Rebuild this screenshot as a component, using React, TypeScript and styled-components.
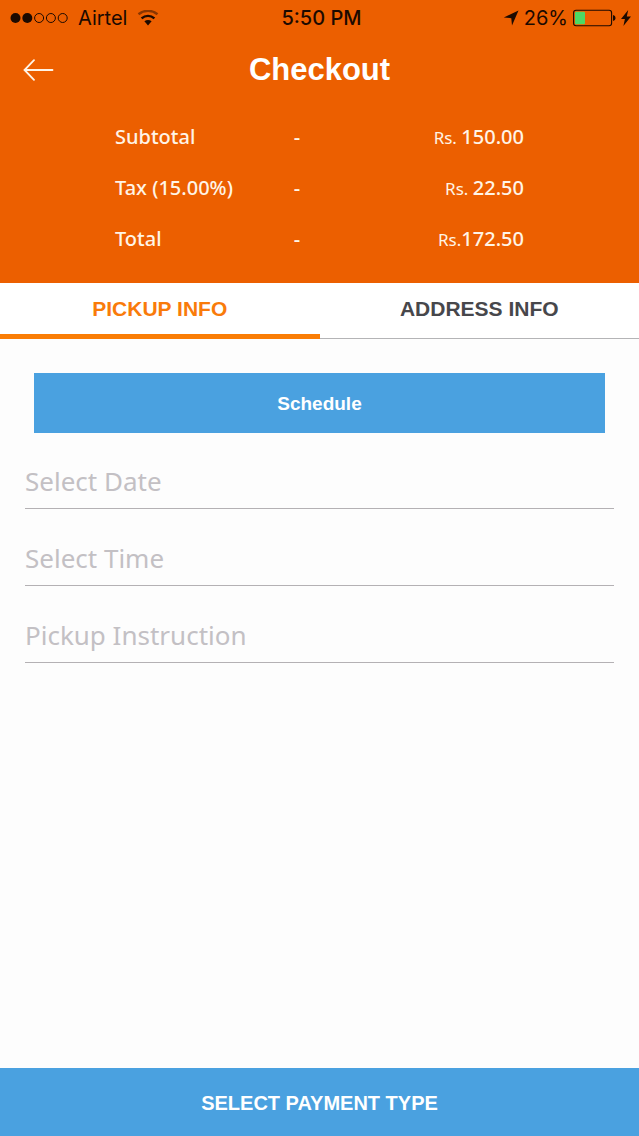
import React from "react";
import styled, { createGlobalStyle } from "styled-components";

const GlobalStyle = createGlobalStyle`
  *, *::before, *::after { box-sizing: border-box; }
  body { margin: 0; background: #fdfdfd; }
  button, input { font: inherit; margin: 0; border: 0; border-radius: 0; }
`;

const Screen = styled.div`
  min-height: 100vh;
  display: flex;
  flex-direction: column;
  background: #fdfdfd;
  font-family: "Liberation Sans", Arial, sans-serif;
`;

const Header = styled.header`
  background: #ec5f00;
  color: #fff4e6;
  padding-bottom: 19px;
`;

const StatusBar = styled.div`
  display: grid;
  grid-template-columns: 1fr auto 1fr;
  align-items: center;
  height: 35px;
  padding: 0 8px 0 10px;
  color: #1c0a00;
  font-family: Inter, sans-serif;
  font-size: 20px;
  line-height: 24px;
`;

const StatusGroup = styled.div<{ $end?: boolean }>`
  display: flex;
  align-items: center;
  justify-content: ${(p) => (p.$end ? "flex-end" : "flex-start")};
  gap: ${(p) => (p.$end ? "5px" : "10px")};
`;

const Clock = styled.time`
  font-weight: 500;
  padding-left: 2px;
`;

const TitleBar = styled.div`
  display: grid;
  grid-template-columns: 64px 1fr 64px;
  align-items: center;
  height: 70px;
`;

const BackButton = styled.button`
  display: flex;
  padding: 8px 0 8px 23px;
  background: none;
  color: inherit;
`;

const Title = styled.h1`
  margin: 0;
  text-align: center;
  color: #fff;
  font-size: 31px;
  line-height: 36px;
  font-weight: 700;
`;

const Summary = styled.table`
  width: 64%;
  margin: 6px auto 0;
  table-layout: fixed;
  border-collapse: collapse;
  font-family: "Noto Sans", sans-serif;
  font-size: 20px;
  line-height: 27px;
  font-weight: 500;
`;

const SummaryLabel = styled.th`
  height: 51px;
  padding: 0;
  text-align: left;
  font-weight: 500;
`;

const SummaryCell = styled.td<{ $end?: boolean }>`
  padding: 0;
  text-align: ${(p) => (p.$end ? "right" : "center")};
`;

const Currency = styled.span`
  font-size: 17px;
  font-weight: 400;
`;

const Tabs = styled.div`
  display: grid;
  grid-template-columns: 1fr 1fr;
  height: 56px;
`;

const Tab = styled.button<{ $active?: boolean }>`
  padding: 0;
  background: #fff;
  color: ${(p) => (p.$active ? "#f97b0a" : "#47474b")};
  && {
    border-bottom: ${(p) => (p.$active ? "5px solid #fa7d05" : "1px solid #b4b4b6")};
    padding-bottom: ${(p) => (p.$active ? "0" : "4px")};
    font-size: 21px;
    line-height: 24px;
    font-weight: 700;
  }
`;

const Form = styled.form`
  flex: 1;
  padding: 34px 25px 24px;
`;

const ScheduleButton = styled.button`
  display: block;
  width: calc(100% - 18px);
  height: 60px;
  background: #4aa1e0;
  color: #fff;
  && {
    margin: 0 9px 23px;
    padding: 2px 0 0;
    font-size: 19px;
    font-weight: 700;
  }
`;

const Field = styled.input`
  display: block;
  width: 100%;
  height: 53px;
  padding: 0 0 3px;
  background: transparent;
  color: #47474b;
  outline: none;
  && {
    margin-bottom: 24px;
    border-bottom: 1px solid #b4b1b4;
    font-family: "Noto Sans", sans-serif;
    font-size: 26px;
    font-weight: 400;
  }
  &::placeholder {
    color: #c3c0c4;
    opacity: 1;
  }
`;

const PaymentButton = styled.button`
  width: 100%;
  height: 68px;
  background: #4aa1e0;
  color: #fff;
  && {
    padding: 2px 0 0;
    font-size: 20px;
    font-weight: 700;
  }
`;

const SignalIcon = () => (
  <svg width="58" height="12" viewBox="0 0 58 12" aria-hidden="true">
    {[0, 1, 2, 3, 4].map((i) => (
      <circle
        key={i}
        cx={5.5 + i * 11.8}
        cy="6"
        r={i < 2 ? 5 : 4.5}
        fill={i < 2 ? "#1c0a00" : "none"}
        stroke={i < 2 ? "none" : "#1c0a00"}
      />
    ))}
  </svg>
);

const WifiIcon = () => (
  <svg width="22" height="16" viewBox="0 0 22 16" fill="none" strokeWidth="2.4" aria-hidden="true">
    <path d="M1.5 4.2C7 -0.3 15 -0.3 20.5 4.2" stroke="#8a3600" />
    <path d="M4.6 8.4C8.3 5 13.7 5 17.4 8.4" stroke="#1c0a00" />
    <path d="M7.4 11.3C9.5 9.6 12.5 9.6 14.6 11.3L11 15.4Z" fill="#1c0a00" />
  </svg>
);

const LocationIcon = () => (
  <svg width="16" height="16" viewBox="0 0 16 16" aria-hidden="true">
    <path d="M15.5 .5L9 15.5L8.3 8.2L.8 7.4Z" fill="#1c0a00" />
  </svg>
);

const BatteryIcon = () => (
  <svg width="43" height="18" viewBox="0 0 43 18" aria-hidden="true">
    <rect x=".6" y="1.2" width="38" height="15.6" rx="2.5" fill="none" stroke="#1c0a00" strokeWidth="1.1" />
    <rect x="2" y="2.8" width="10" height="12.4" rx="1" fill="#4cd964" />
    <path d="M40 6Q42.6 6.5 42.6 9T40 12Z" fill="#1c0a00" />
  </svg>
);

const BoltIcon = () => (
  <svg width="10" height="16" viewBox="0 0 10 16" aria-hidden="true">
    <path d="M7.2 0L0 9H3.9L2.4 16L10 6.6H5.8Z" fill="#1c0a00" />
  </svg>
);

const BackIcon = () => (
  <svg width="31" height="22" viewBox="0 0 31 22" fill="none" stroke="currentColor" strokeWidth="1.8" strokeLinecap="round" aria-hidden="true">
    <path d="M29.5 11H1.5M11 1.2L1.5 11L11 20.8" />
  </svg>
);

const charges = [
  { label: "Subtotal", currency: "Rs. ", amount: "150.00" },
  { label: "Tax (15.00%)", currency: "Rs. ", amount: "22.50" },
  { label: "Total", currency: "Rs.", amount: "172.50" },
];

const fields = ["Select Date", "Select Time", "Pickup Instruction"];

export default function App() {
  return (
    <Screen>
      <GlobalStyle />
      <Header>
        <StatusBar>
          <StatusGroup>
            <SignalIcon />
            <span>Airtel</span>
            <WifiIcon />
          </StatusGroup>
          <Clock>5:50 PM</Clock>
          <StatusGroup $end>
            <LocationIcon />
            <span>26%</span>
            <BatteryIcon />
            <BoltIcon />
          </StatusGroup>
        </StatusBar>
        <TitleBar>
          <BackButton type="button" aria-label="Back">
            <BackIcon />
          </BackButton>
          <Title>Checkout</Title>
        </TitleBar>
        <Summary>
          <colgroup>
            <col style={{ width: "39%" }} />
            <col style={{ width: "11%" }} />
            <col style={{ width: "50%" }} />
          </colgroup>
          <tbody>
            {charges.map((c) => (
              <tr key={c.label}>
                <SummaryLabel scope="row">{c.label}</SummaryLabel>
                <SummaryCell>-</SummaryCell>
                <SummaryCell $end>
                  <Currency>{c.currency}</Currency>
                  {c.amount}
                </SummaryCell>
              </tr>
            ))}
          </tbody>
        </Summary>
      </Header>
      <Tabs role="tablist">
        <Tab type="button" role="tab" aria-selected="true" $active>
          PICKUP INFO
        </Tab>
        <Tab type="button" role="tab" aria-selected="false">
          ADDRESS INFO
        </Tab>
      </Tabs>
      <Form onSubmit={(e) => e.preventDefault()}>
        <ScheduleButton type="button">Schedule</ScheduleButton>
        {fields.map((name) => (
          <Field key={name} type="text" placeholder={name} aria-label={name} />
        ))}
      </Form>
      <PaymentButton type="button">SELECT PAYMENT TYPE</PaymentButton>
    </Screen>
  );
}
